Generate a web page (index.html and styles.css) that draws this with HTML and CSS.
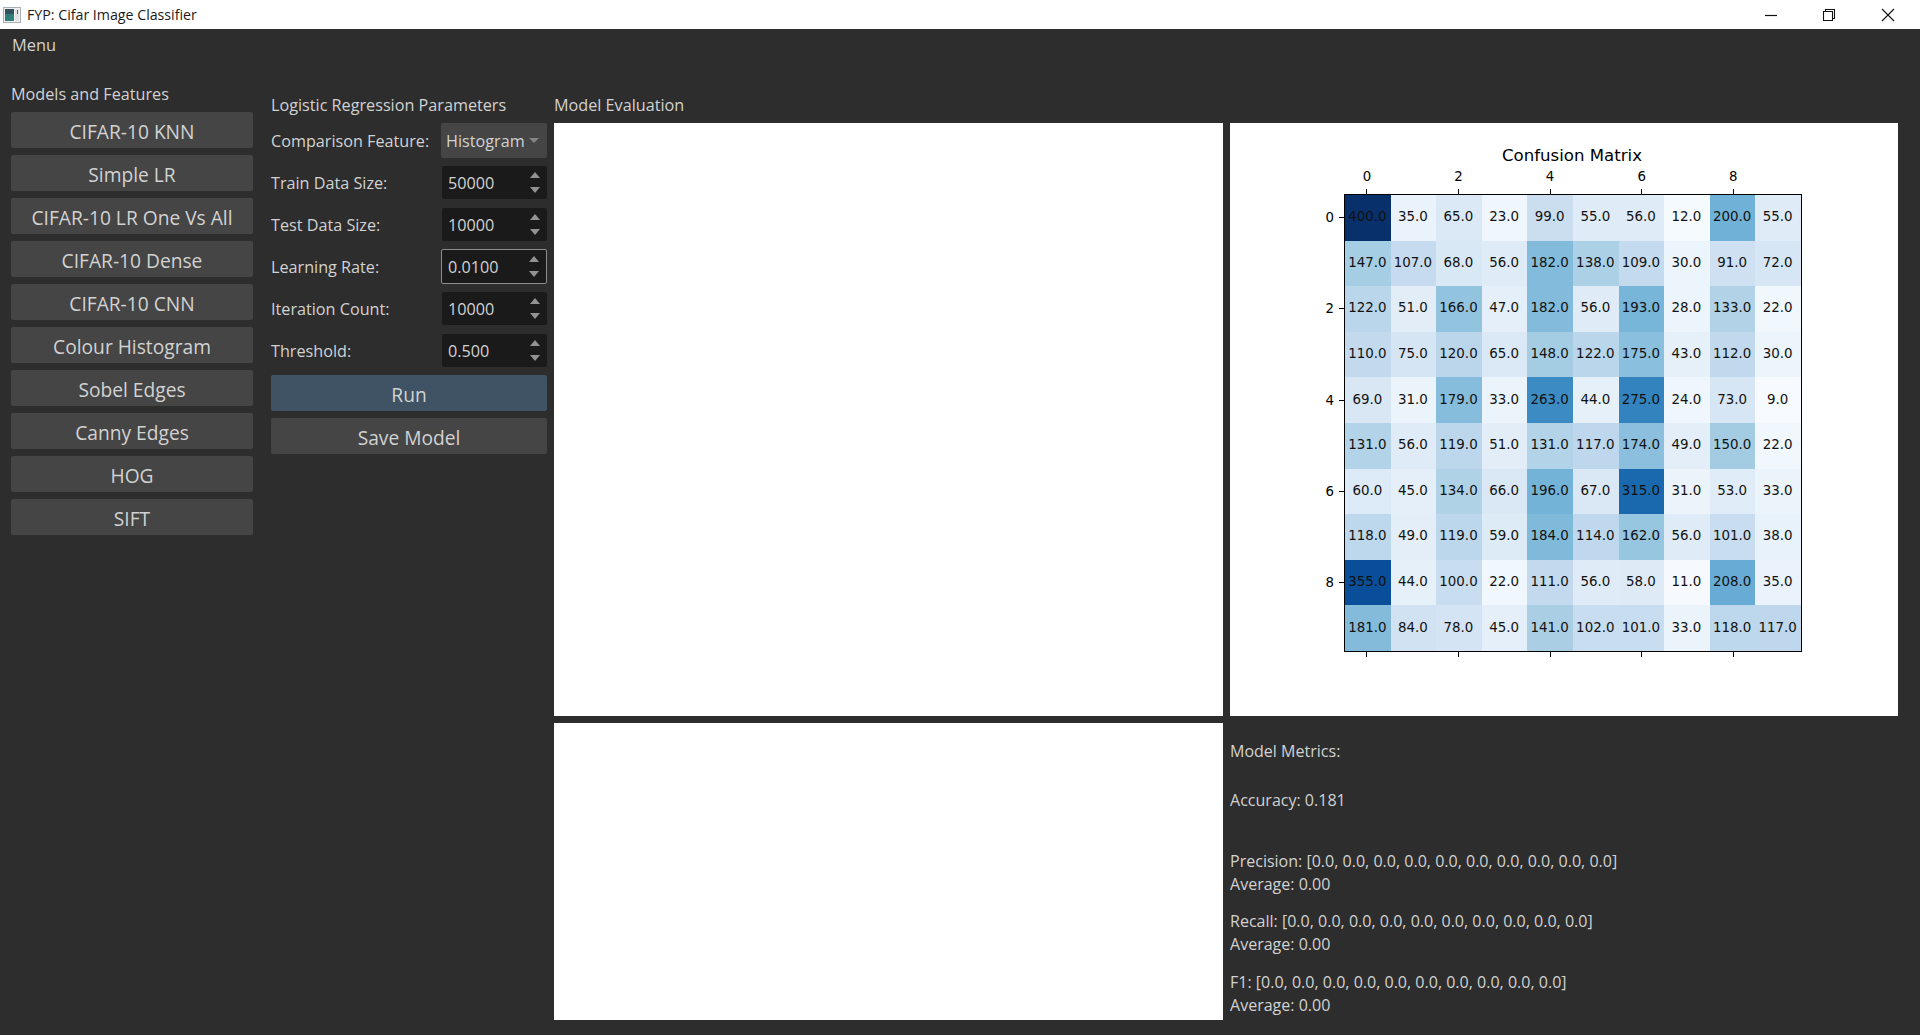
FILE: index.html
```html
<!DOCTYPE html>
<html lang="en">
<head>
<meta charset="utf-8">
<title>FYP: Cifar Image Classifier</title>
<link rel="stylesheet" href="styles.css">
</head>
<body>
<header class="titlebar">
  <svg class="app-icon" width="18" height="16" viewBox="0 0 18 16"><rect x="0.5" y="0.5" width="17" height="15" fill="#f0f0f0" stroke="#a9b0b3"/><rect x="2" y="2" width="9" height="12" fill="#2e7f7a"/><rect x="2" y="2" width="9" height="5" fill="#33505f"/><rect x="12" y="2" width="4" height="12" fill="#dfe3e6"/><rect x="14" y="3" width="1" height="4" fill="#59656b"/></svg>
  <span class="title-text">FYP: Cifar Image Classifier</span>
  <div class="win-controls">
    <span class="win-btn"><svg width="14" height="14" viewBox="0 0 14 14"><path d="M1 7.5H13" stroke="#111" stroke-width="1.2" fill="none"/></svg></span>
    <span class="win-btn"><svg width="14" height="14" viewBox="0 0 14 14"><path d="M1.5 3.5H10.5V12.5H1.5ZM3.5 3.5V1.5H12.5V10.5H10.5" stroke="#111" stroke-width="1.1" fill="none"/></svg></span>
    <span class="win-btn"><svg width="14" height="14" viewBox="0 0 14 14"><path d="M1 1L13 13M13 1L1 13" stroke="#111" stroke-width="1.1" fill="none"/></svg></span>
  </div>
</header>
<nav class="menubar"><span>Menu</span></nav>
<main class="content">
  <section class="col-models">
    <h2 class="heading">Models and Features</h2>
    <div class="btn-stack">
      <button class="btn">CIFAR-10 KNN</button>
      <button class="btn">Simple LR</button>
      <button class="btn">CIFAR-10 LR One Vs All</button>
      <button class="btn">CIFAR-10 Dense</button>
      <button class="btn">CIFAR-10 CNN</button>
      <button class="btn">Colour Histogram</button>
      <button class="btn">Sobel Edges</button>
      <button class="btn">Canny Edges</button>
      <button class="btn">HOG</button>
      <button class="btn">SIFT</button>
    </div>
  </section>
  <section class="col-params">
    <h2 class="heading">Logistic Regression Parameters</h2>
    <div class="form">
      <span class="label">Comparison Feature:</span>
      <div class="combo"><span>Histogram</span><i class="combo-arrow"></i></div>
      <span class="label">Train Data Size:</span>
      <div class="spin"><span>50000</span><span class="arrows"><i class="up"></i><i class="down"></i></span></div>
      <span class="label">Test Data Size:</span>
      <div class="spin"><span>10000</span><span class="arrows"><i class="up"></i><i class="down"></i></span></div>
      <span class="label">Learning Rate:</span>
      <div class="spin focused"><span>0.0100</span><span class="arrows"><i class="up"></i><i class="down"></i></span></div>
      <span class="label">Iteration Count:</span>
      <div class="spin"><span>10000</span><span class="arrows"><i class="up"></i><i class="down"></i></span></div>
      <span class="label">Threshold:</span>
      <div class="spin"><span>0.500</span><span class="arrows"><i class="up"></i><i class="down"></i></span></div>
    </div>
    <div class="btn-stack actions">
      <button class="btn primary">Run</button>
      <button class="btn">Save Model</button>
    </div>
  </section>
  <section class="col-eval">
    <h2 class="heading">Model Evaluation</h2>
    <div class="panels">
      <div class="panel"></div>
      <div class="panel chart-panel">
        <div class="chart">
          <div class="chart-title">Confusion Matrix</div>
          <div class="x-axis top">
            <span class="xt">0</span><span></span><span class="xt">2</span><span></span><span class="xt">4</span><span></span><span class="xt">6</span><span></span><span class="xt">8</span><span></span>
          </div>
          <div class="y-axis">
            <span class="yt">0</span><span></span><span class="yt">2</span><span></span><span class="yt">4</span><span></span><span class="yt">6</span><span></span><span class="yt">8</span><span></span>
          </div>
          <div class="matrix" id="matrix">
            <span>400.0</span><span>35.0</span><span>65.0</span><span>23.0</span><span>99.0</span><span>55.0</span><span>56.0</span><span>12.0</span><span>200.0</span><span>55.0</span>
            <span>147.0</span><span>107.0</span><span>68.0</span><span>56.0</span><span>182.0</span><span>138.0</span><span>109.0</span><span>30.0</span><span>91.0</span><span>72.0</span>
            <span>122.0</span><span>51.0</span><span>166.0</span><span>47.0</span><span>182.0</span><span>56.0</span><span>193.0</span><span>28.0</span><span>133.0</span><span>22.0</span>
            <span>110.0</span><span>75.0</span><span>120.0</span><span>65.0</span><span>148.0</span><span>122.0</span><span>175.0</span><span>43.0</span><span>112.0</span><span>30.0</span>
            <span>69.0</span><span>31.0</span><span>179.0</span><span>33.0</span><span>263.0</span><span>44.0</span><span>275.0</span><span>24.0</span><span>73.0</span><span>9.0</span>
            <span>131.0</span><span>56.0</span><span>119.0</span><span>51.0</span><span>131.0</span><span>117.0</span><span>174.0</span><span>49.0</span><span>150.0</span><span>22.0</span>
            <span>60.0</span><span>45.0</span><span>134.0</span><span>66.0</span><span>196.0</span><span>67.0</span><span>315.0</span><span>31.0</span><span>53.0</span><span>33.0</span>
            <span>118.0</span><span>49.0</span><span>119.0</span><span>59.0</span><span>184.0</span><span>114.0</span><span>162.0</span><span>56.0</span><span>101.0</span><span>38.0</span>
            <span>355.0</span><span>44.0</span><span>100.0</span><span>22.0</span><span>111.0</span><span>56.0</span><span>58.0</span><span>11.0</span><span>208.0</span><span>35.0</span>
            <span>181.0</span><span>84.0</span><span>78.0</span><span>45.0</span><span>141.0</span><span>102.0</span><span>101.0</span><span>33.0</span><span>118.0</span><span>117.0</span>
          </div>
          <div class="x-axis bottom">
            <span class="xt"></span><span></span><span class="xt"></span><span></span><span class="xt"></span><span></span><span class="xt"></span><span></span><span class="xt"></span><span></span>
          </div>
        </div>
      </div>
      <div class="panel"></div>
      <div class="metrics">
        <p class="m-head">Model Metrics:</p>
        <p class="m-acc">Accuracy: 0.181</p>
        <p class="m-prec">Precision: [0.0, 0.0, 0.0, 0.0, 0.0, 0.0, 0.0, 0.0, 0.0, 0.0]<br>Average: 0.00</p>
        <p class="m-rec">Recall: [0.0, 0.0, 0.0, 0.0, 0.0, 0.0, 0.0, 0.0, 0.0, 0.0]<br>Average: 0.00</p>
        <p class="m-f1">F1: [0.0, 0.0, 0.0, 0.0, 0.0, 0.0, 0.0, 0.0, 0.0, 0.0]<br>Average: 0.00</p>
      </div>
    </div>
  </section>
</main>
<script src="app.js"></script>
</body>
</html>
```
FILE: styles.css
```css
* { box-sizing: border-box; }
html, body { margin: 0; height: 100%; }
body {
  width: 1920px; height: 1035px; overflow: hidden;
  background: #2d2d2d; color: #d2d2d2;
  font-family: "Open Sans", "Liberation Sans", sans-serif;
  font-size: 16.2px;
  display: flex; flex-direction: column;
}
.titlebar {
  height: 29px; background: #fff; color: #1a1a1a;
  display: flex; align-items: center; padding: 0 3px;
  font-size: 14.2px;
}
.app-icon { margin-right: 6px; flex: none; }
.win-controls { margin-left: auto; display: flex; }
.win-btn { width: 58.5px; height: 29px; display: flex; align-items: center; justify-content: center; }
.menubar { height: 32px; padding: 5px 0 0 12px; line-height: 22px; font-size: 16.4px; }
.content { flex: 1; display: flex; padding-left: 11px; }
.heading { margin: 0; font: inherit; line-height: 22px; }
.col-models { width: 242px; margin-right: 18px; padding-top: 22px; }
.col-params { width: 276px; margin-right: 7px; padding-top: 33px; }
.col-eval { flex: 1; padding-top: 33px; }
.col-models .heading, .col-params .heading { margin-bottom: 7px; }
.btn-stack { display: flex; flex-direction: column; gap: 7px; }
.actions { margin-top: 7px; }
.btn {
  height: 36px; border: 0; border-radius: 2px; padding: 2px 0 0;
  background: #454545; color: #d2d2d2;
  font-family: inherit; font-size: 19.2px;
}
.btn.primary { background: #3f5364; }
.form { display: grid; grid-template-columns: 170px 106px; grid-auto-rows: 35px; row-gap: 7px; align-items: center; }
.combo {
  height: 35px; background: #454545; border-radius: 2px;
  display: flex; align-items: center; justify-content: space-between;
  padding: 0 8px 0 5px;
}
.combo-arrow { width: 0; height: 0; border: 5px solid transparent; border-top: 5px solid #858585; border-bottom: 0; }
.spin {
  height: 33px; margin-left: 1px; background: #1a1a1a; border-radius: 2px;
  display: flex; align-items: center; justify-content: space-between;
  padding: 0 7px 0 6px;
}
.spin.focused { height: 35px; margin-left: 0; border: 1px solid #8d8d8d; padding-left: 6px; }
.arrows { display: flex; flex-direction: column; gap: 9px; }
.arrows i { display: block; width: 0; height: 0; border: 5px solid transparent; }
.arrows .up { border-bottom: 6px solid #929292; border-top: 0; }
.arrows .down { border-top: 6px solid #929292; border-bottom: 0; }
.col-eval .heading { margin-bottom: 7px; }
.panels { display: grid; grid-template-columns: 669px 668px; grid-template-rows: 593px 297px; gap: 7px; }
.panel { background: #fff; }
.chart-panel { color: #000; font-family: "DejaVu Sans", sans-serif; padding: 23px 0 0 71px; }
.chart {
  display: grid; grid-template-columns: 43px 458px;
  grid-template-rows: 20px 28px 458px 6px;
  grid-template-areas: ". title" ". xtop" "yaxis matrix" ". xbot";
}
.chart-title { grid-area: title; font-size: 16.6px; line-height: 20px; text-align: center; padding-right: 2px; }
.x-axis { display: grid; grid-template-columns: repeat(10, 1fr); font-size: 13.3px; }
.x-axis.top { grid-area: xtop; }
.x-axis.bottom { grid-area: xbot; }
.xt { display: flex; flex-direction: column; align-items: center; line-height: 20px; }
.xt::after { content: ""; width: 1px; height: 5px; background: #000; }
.top .xt { justify-content: flex-end; gap: 2px; }
.y-axis { grid-area: yaxis; display: grid; grid-template-rows: repeat(10, 1fr); font-size: 13.3px; padding: 1px 0; }
.yt { display: flex; align-items: center; justify-content: flex-end; gap: 5px; }
.yt::after { content: ""; width: 5px; height: 1px; background: #000; }
.matrix {
  grid-area: matrix; border: 1px solid #000;
  display: grid; grid-template-columns: repeat(10, 1fr); grid-template-rows: repeat(10, 1fr);
  font-size: 13.4px; color: #111;
}
.matrix span { display: flex; align-items: center; justify-content: center; white-space: nowrap; padding: 0 1px 2px 0; }
.metrics { padding-top: 17px; line-height: 23px; font-size: 16.05px; }
.metrics p { margin: 0; }
.metrics .m-acc { margin-top: 26px; }
.metrics .m-prec { margin-top: 38px; }
.metrics .m-rec { margin-top: 14px; }
.metrics .m-f1 { margin-top: 15px; }
```
FILE: app.js
```js
var stops = [[247,251,255],[222,235,247],[198,219,239],[158,202,225],[107,174,214],[66,146,198],[33,113,181],[8,81,156],[8,48,107]];
var lo = 9, hi = 400;
document.querySelectorAll('#matrix span').forEach(function (cell) {
  var t = (parseFloat(cell.textContent) - lo) / (hi - lo) * 8;
  var i = Math.min(Math.floor(t), 7), f = t - i;
  var c = stops[i].map(function (v, k) { return Math.round(v + (stops[i + 1][k] - v) * f); });
  cell.style.backgroundColor = 'rgb(' + c.join(',') + ')';
});
```
